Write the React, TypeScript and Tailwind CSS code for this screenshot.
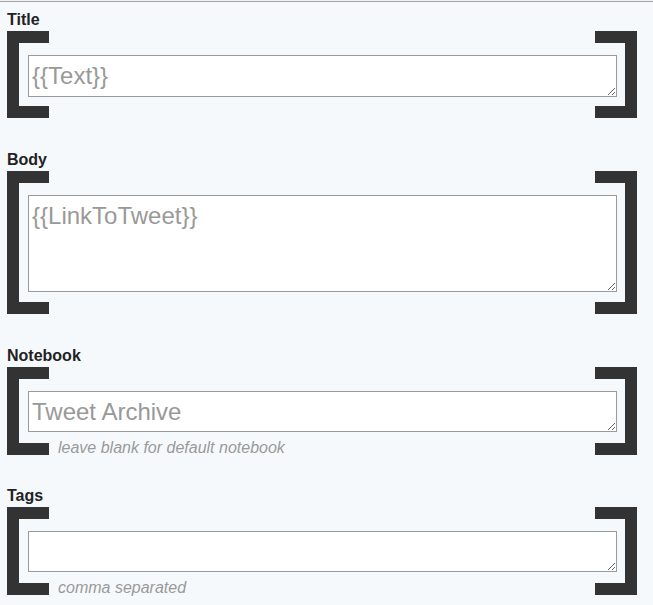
import React from "react";

type FieldProps = {
  label: string;
  value: string;
  height: string;
  hint?: string;
  pb: string;
  mb: string;
};

function Field({ label, value, height, hint, pb, mb }: FieldProps) {
  return (
    <div className={mb}>
      <div className="text-[16px] leading-[19px] font-bold text-[#222222] mb-[2px]">{label}</div>
      <div className="grid grid-cols-[42px_1fr_42px] w-[630px]">
        <div className="col-start-1 row-start-1 border-l-[12px] border-t-[12px] border-b-[12px] border-[#333333]" />
        <div className="col-start-3 row-start-1 border-r-[12px] border-t-[12px] border-b-[12px] border-[#333333]" />
        <div className={`col-start-1 col-span-3 row-start-1 flex flex-col pl-[21px] pr-[20px] pt-[24px] ${pb}`}>
          <textarea
            defaultValue={value}
            className={`block w-full ${height} bg-white border border-[#9a9a9a] text-[24px] leading-[28px] text-[#999999] pt-[6px] px-[3px] outline-none`}
          />
          {hint && (
            <div className="mt-[9px] pl-[30px] text-[16px] leading-[14px] italic text-[#999999]">{hint}</div>
          )}
        </div>
      </div>
    </div>
  );
}

export default function App() {
  return (
    <div
      className="w-[653px] h-[605px] bg-[#f6f9fc] overflow-hidden"
      style={{ fontFamily: '"Liberation Sans", Arial, sans-serif' }}
    >
      <div className="h-px bg-[#f0f0f0]" />
      <div className="h-px bg-[#a3a3a3]" />
      <div className="pt-[8px] pl-[7px]">
        <Field label="Title" value="{{Text}}" height="h-[42px]" pb="pb-[21px]" mb="mb-[32px]" />
        <Field label="Body" value="{{LinkToTweet}}" height="h-[97px]" pb="pb-[22px]" mb="mb-[32px]" />
        <Field
          label="Notebook"
          value="Tweet Archive"
          height="h-[41px]"
          hint="leave blank for default notebook"
          pb="pb-0"
          mb="mb-[31px]"
        />
        <Field label="Tags" value="" height="h-[41px]" hint="comma separated" pb="pb-0" mb="mb-0" />
      </div>
    </div>
  );
}
